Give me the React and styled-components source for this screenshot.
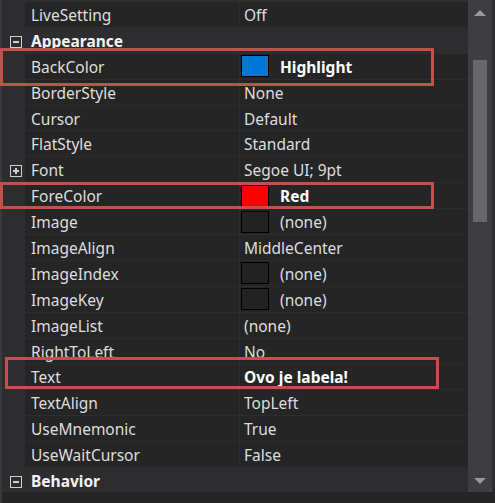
import styled, { createGlobalStyle } from "styled-components";

const GlobalStyle = createGlobalStyle`
  html, body {
    margin: 0;
    padding: 0;
    background: #252526;
  }
`;

const Panel = styled.div`
  position: relative;
  width: 495px;
  height: 503px;
  background: #252526;
  display: flex;
  flex-direction: column;
  overflow: hidden;
  font-family: "Noto Sans", "Open Sans", sans-serif;
  font-size: 15.5px;
  color: #e6e6e6;
`;

const Body = styled.div`
  height: 492px;
  display: flex;
  border-left: 2px solid #3a3a3d;
`;

const Rows = styled.div`
  flex: 1;
  padding-top: 2px;
  overflow: hidden;
  background: #2d2d30;
`;

const Row = styled.div`
  height: 25.9px;
  display: grid;
  grid-template-columns: 23px 215px 1fr;
  background: ${(p) => (p.$category ? "#2d2d30" : "transparent")};
`;

const Gutter = styled.div`
  display: flex;
  align-items: center;
  justify-content: center;
  padding-left: 4px;
  padding-top: 2px;
`;

const ExpandBox = styled.span`
  position: relative;
  box-sizing: border-box;
  width: 12px;
  height: 12px;
  border: 1px solid #d0d0d0;

  &::before,
  &::after {
    content: "";
    position: absolute;
    background: #d0d0d0;
  }
  &::before {
    left: 2px;
    right: 2px;
    top: 4px;
    height: 2px;
  }
  &::after {
    display: ${(p) => (p.$plus ? "block" : "none")};
    top: 2px;
    bottom: 2px;
    left: 4px;
    width: 2px;
  }
`;

const Name = styled.div`
  display: flex;
  align-items: center;
  padding: 1px 0 0 6px;
  background: ${(p) => (p.$category ? "transparent" : "#252526")};
  border-right: ${(p) => (p.$category ? "none" : "1px solid #2d2d30")};
  border-bottom: ${(p) => (p.$category ? "none" : "1px solid #2d2d30")};
  font-weight: ${(p) => (p.$category ? 700 : 400)};
  color: ${(p) => (p.$category ? "#f4f4f4" : "#dedede")};
  white-space: nowrap;
`;

const Value = styled.div`
  display: flex;
  align-items: center;
  gap: 11px;
  padding: 1px 0 0 ${(p) => (p.$swatch ? "1px" : "4px")};
  background: ${(p) => (p.$category ? "transparent" : "#252526")};
  border-bottom: ${(p) => (p.$category ? "none" : "1px solid #2d2d30")};
  font-weight: ${(p) => (p.$bold ? 700 : 400)};
  color: ${(p) => (p.$bold ? "#ffffff" : "#dedede")};
  white-space: nowrap;
`;

const Swatch = styled.span`
  box-sizing: border-box;
  width: 28px;
  height: 22px;
  margin-top: -1px;
  border: 1px solid #000;
  background: ${(p) => p.$color || "#222223"};
`;

const ScrollBar = styled.div`
  width: 27px;
  background: #3e3e42;
  display: flex;
  flex-direction: column;
  align-items: center;
  justify-content: space-between;
  padding: 10px 0 8px;
  box-sizing: border-box;
  border-right: 3px solid #2d2d30;
`;

const Arrow = styled.span`
  width: 0;
  height: 0;
  border-left: 6px solid transparent;
  border-right: 6px solid transparent;
  ${(p) =>
    p.$down
      ? "border-top: 6px solid #999999;"
      : "border-bottom: 6px solid #999999;"}
`;

const Track = styled.div`
  flex: 1;
  width: 100%;
  display: flex;
  justify-content: center;
  padding-top: 44px;
`;

const Thumb = styled.div`
  width: 14px;
  height: 162px;
  background: #686868;
`;

const Footer = styled.div`
  flex: 1;
  background: #252526;
  border-left: 2px solid #3a3a3d;
`;

const Marker = styled.div`
  position: absolute;
  box-sizing: border-box;
  border: 3px solid #c4504e;
  pointer-events: none;
`;

const props = [
  { name: "LiveSetting", value: "Off" },
  { category: "Appearance" },
  { name: "BackColor", value: "Highlight", swatch: "#0078d7", bold: true },
  { name: "BorderStyle", value: "None" },
  { name: "Cursor", value: "Default" },
  { name: "FlatStyle", value: "Standard" },
  { name: "Font", value: "Segoe UI; 9pt", expandable: true },
  { name: "ForeColor", value: "Red", swatch: "#ff0000", bold: true },
  { name: "Image", value: "(none)", swatch: "empty" },
  { name: "ImageAlign", value: "MiddleCenter" },
  { name: "ImageIndex", value: "(none)", swatch: "empty" },
  { name: "ImageKey", value: "(none)", swatch: "empty" },
  { name: "ImageList", value: "(none)" },
  { name: "RightToLeft", value: "No" },
  { name: "Text", value: "Ovo je labela!", bold: true },
  { name: "TextAlign", value: "TopLeft" },
  { name: "UseMnemonic", value: "True" },
  { name: "UseWaitCursor", value: "False" },
  { category: "Behavior" },
];

const App = () => {
  return (
    <>
      <GlobalStyle />
      <Panel>
        <Body>
          <Rows>
            {props.map((item, index) => {
              if (item.category) {
                return (
                  <Row key={index} $category>
                    <Gutter>
                      <ExpandBox />
                    </Gutter>
                    <Name $category>{item.category}</Name>
                    <Value $category />
                  </Row>
                );
              }
              return (
                <Row key={index}>
                  <Gutter>{item.expandable && <ExpandBox $plus />}</Gutter>
                  <Name>{item.name}</Name>
                  <Value $bold={item.bold} $swatch={!!item.swatch}>
                    {item.swatch && (
                      <Swatch
                        $color={item.swatch === "empty" ? null : item.swatch}
                      />
                    )}
                    {item.value}
                  </Value>
                </Row>
              );
            })}
          </Rows>
          <ScrollBar>
            <Arrow />
            <Track>
              <Thumb />
            </Track>
            <Arrow $down />
          </ScrollBar>
        </Body>
        <Footer />
        <Marker style={{ left: 0, top: 48, width: 434, height: 38 }} />
        <Marker style={{ left: 0, top: 182, width: 434, height: 27 }} />
        <Marker style={{ left: 5, top: 357, width: 434, height: 32 }} />
      </Panel>
    </>
  );
};

export default App;
